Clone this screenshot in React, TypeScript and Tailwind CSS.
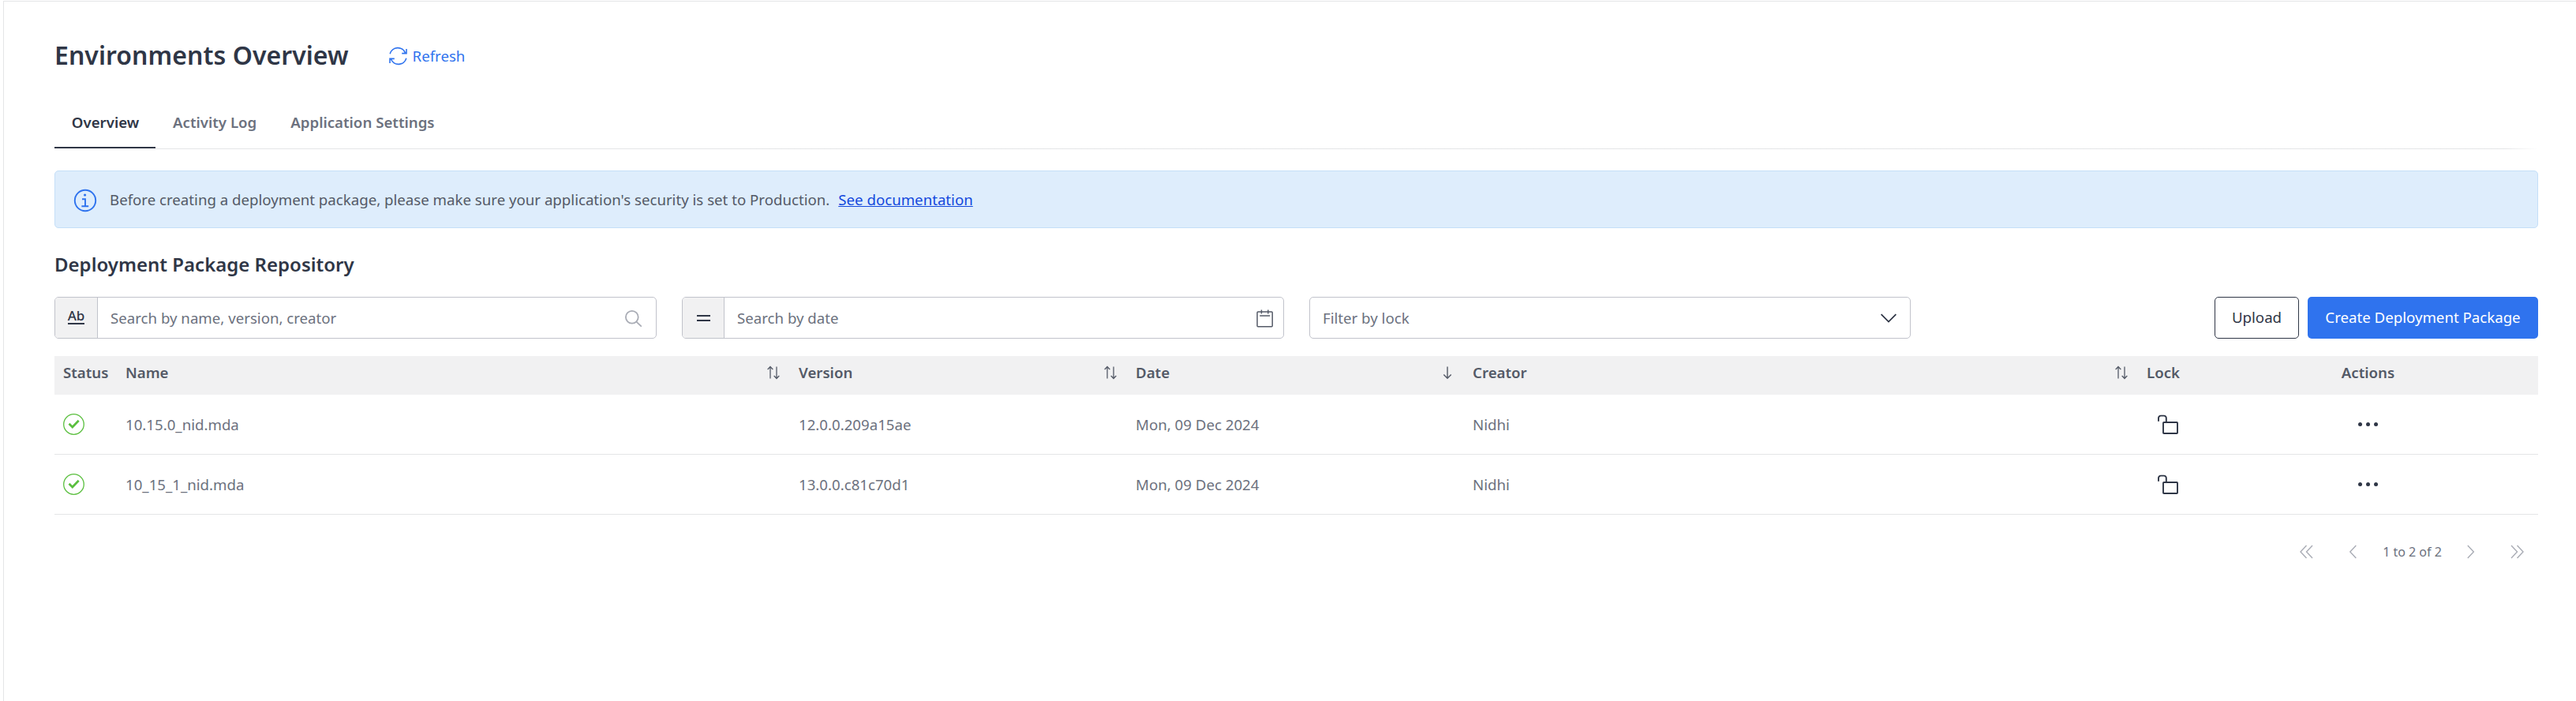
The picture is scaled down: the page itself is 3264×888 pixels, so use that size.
import React from "react";

const Refresh = () => (
  <svg className="size-6 shrink-0" viewBox="0 0 24 24" fill="none" stroke="currentColor" strokeWidth="1.6">
    <path d="M2.2 9.2A10.2 10.2 0 0 1 21.6 8.2M23 3V8.6H17.2" />
    <path d="M22.8 14.8A10.2 10.2 0 0 1 3.4 15.8M2 21V15.4H7.8" />
  </svg>
);

const Info = () => (
  <svg className="size-[30px] mt-[3px] shrink-0" viewBox="0 0 30 30" fill="none" stroke="#2f73ee" strokeWidth="1.9">
    <circle cx="15" cy="15" r="13.2" />
    <path d="M11 13.2H15V22M10.4 22.2H19.2" />
    <circle cx="14.6" cy="8" r="1.6" fill="#2f73ee" stroke="none" />
  </svg>
);

const Sort = () => (
  <svg className="w-4 h-[18px] shrink-0" viewBox="0 0 16 18" fill="none" stroke="#545a67" strokeWidth="1.3">
    <path d="M4 16.5V1.5M.7 5 4 1.5 7.3 5M12 1.5V16.5M8.7 13 12 16.5 15.3 13" />
  </svg>
);

const Down = () => (
  <svg className="w-4 h-[18px] shrink-0" viewBox="0 0 16 18" fill="none" stroke="#545a67" strokeWidth="1.4">
    <path d="M8 1.5V16M3.3 11.5 8 16.3 12.7 11.5" />
  </svg>
);

const Check = () => (
  <svg className="size-[27px]" viewBox="0 0 27 27" fill="none" stroke="#5bbf3f">
    <circle cx="13.5" cy="13.5" r="12.8" strokeWidth="1.3" />
    <path d="M7.5 12.8 11.8 17 19.7 8.8" strokeWidth="2.7" />
  </svg>
);

const Unlock = () => (
  <svg className="w-[26px] h-[25px] mr-px" viewBox="0 0 26 25" fill="none" stroke="#2f3646" strokeWidth="1.9">
    <path d="M1 8.7V4.6A3 3 0 0 1 4 1.6H7.8A3 3 0 0 1 10.8 4.6V9.5" />
    <rect x="7" y="10" width="18" height="14" rx="0.8" />
  </svg>
);

const columns = "grid grid-cols-[80px_853px_427px_427px_854px_75px_431px]";

const headers = [
  { label: "Name", icon: <Sort /> },
  { label: "Version", icon: <Sort /> },
  { label: "Date", icon: <Down /> },
  { label: "Creator", icon: <Sort /> },
];

const rows = [
  ["10.15.0_nid.mda", "12.0.0.209a15ae", "Mon, 09 Dec 2024", "Nidhi"],
  ["10_15_1_nid.mda", "13.0.0.c81c70d1", "Mon, 09 Dec 2024", "Nidhi"],
];

const Chevrons = ({ d }: { d: string }) => (
  <svg className="w-[18px] h-[18px] shrink-0" viewBox="0 0 18 18" fill="none" stroke="#a9acb5" strokeWidth="1.4">
    <path d={d} />
  </svg>
);

export default function App() {
  return (
    <div className="w-[3264px] h-[888px] bg-white pt-px font-['Noto_Sans',sans-serif] text-[18.667px] leading-[26px] text-[#6c717e] overflow-hidden">
      <div className="h-full border-t border-l border-[#e4e5e7] ml-1 pl-16 pr-12">
        <header className="flex items-center h-[136px] pt-0.5">
          <h1 className="mb-[3px] text-[32px] leading-[44px] font-semibold tracking-[0.04px] text-[#2f3646]">Environments Overview</h1>
          <button className="ml-[50px] flex items-center gap-[7px] text-[#2f73ee]">
            <Refresh />
            Refresh
          </button>
        </header>

        <nav className="flex h-[51px] w-[3145px] pt-1 font-semibold">
          <span className="w-32 h-[46px] pl-px text-center border-b-2 border-[#2f3646] text-[#2f3646]">Overview</span>
          <span className="ml-[22px]">Activity Log</span>
          <span className="ml-[43px]">Application Settings</span>
        </nav>
        <div className="h-px -mt-px ml-32 bg-linear-to-r from-[#e4e5e7] from-[98.6%] to-transparent" />

        <section className="mt-[27px] h-[73px] flex items-center rounded-[5px] border border-[#c4dff8] bg-[#deedfc] pl-[23px] text-[#545a67]">
          <Info />
          <span className="ml-4">Before creating a deployment package, please make sure your application's security is set to Production.</span>
          <a className="ml-[11px] text-[#1348dd] underline">See documentation</a>
        </section>

        <h2 className="mt-[29px] h-[58px] text-[24px] leading-[34px] font-semibold text-[#2f3646]">Deployment Package Repository</h2>

        <div className="flex h-[53px]">
          <div className="w-[763px] flex items-center rounded-[5px] border border-[#c1c3cb] overflow-hidden">
            <div className="w-[54px] h-full flex items-center justify-center border-r border-[#c1c3cb] bg-[#f1f1f2]">
              <span className="mb-[3px] border-b-2 border-[#2f3646] text-[17px] leading-[18px] font-medium text-[#2f3646]">Ab</span>
            </div>
            <span className="ml-4 grow">Search by name, version, creator</span>
            <svg className="w-6 h-6 mr-[17px]" viewBox="0 0 24 24" fill="none" stroke="#a9acb5" strokeWidth="1.8">
              <circle cx="10.8" cy="10.8" r="7.9" />
              <path d="M16.4 16.6 22.8 22.6" />
            </svg>
          </div>
          <div className="ml-8 w-[763px] flex items-center rounded-[5px] border border-[#c1c3cb] overflow-hidden">
            <div className="w-[53px] h-full flex flex-col gap-1 items-center justify-center border-r border-[#c1c3cb] bg-[#f1f1f2] pt-px">
              <div className="w-[17px] h-0.5 bg-[#2f3646]" />
              <div className="w-[17px] h-0.5 bg-[#2f3646]" />
            </div>
            <span className="ml-4 grow">Search by date</span>
            <svg className="w-[22px] h-6 mr-3" viewBox="0 0 22 24" fill="none" stroke="#545a67" strokeWidth="1.5">
              <rect x="1" y="3.9" width="19.2" height="18.8" rx="1" />
              <path d="M6.4 1.6V6.4M14.8 1.6V6.4M4.2 9.1H17.2" />
            </svg>
          </div>
          <div className="ml-8 w-[762px] flex items-center rounded-[5px] border border-[#c1c3cb]">
            <span className="ml-4 grow">Filter by lock</span>
            <svg className="w-5 h-3 mr-[17px] mt-px" viewBox="0 0 20 12" fill="none" stroke="#2f3646" strokeWidth="1.8">
              <path d="M.6 1.2 10 10.6 19.4 1.2" />
            </svg>
          </div>
          <button className="ml-auto w-[107px] rounded-[5px] border border-[#2f3646] pb-0.5 text-[#2f3646]">Upload</button>
          <button className="ml-[11px] w-[292px] rounded-[5px] bg-[#2f73ee] pb-0.5 text-white">Create Deployment Package</button>
        </div>

        <div className={`${columns} mt-[22px] h-[49px] pt-2 bg-[#f1f1f2] font-semibold text-[#545a67]`}>
          <span className="pl-[11px]">Status</span>
          {headers.map((h) => (
            <span key={h.label} className="flex items-start justify-between pl-2.5 pr-3.5">
              {h.label}
              <span className="pt-1">{h.icon}</span>
            </span>
          ))}
          <span className="pl-2.5">Lock</span>
          <span className="text-center">Actions</span>
        </div>

        {rows.map((r) => (
          <div key={r[0]} className={`${columns} h-[76px] items-center border-b border-[#e4e5e7]`}>
            <span className="pl-[11px]">
              <Check />
            </span>
            {r.map((c) => (
              <span key={c} className="pl-2.5">{c}</span>
            ))}
            <span className="flex justify-center">
              <Unlock />
            </span>
            <span className="flex justify-center gap-[4.5px]">
              <i className="size-[5.5px] rounded-full bg-[#2f3646]" />
              <i className="size-[5.5px] rounded-full bg-[#2f3646]" />
              <i className="size-[5.5px] rounded-full bg-[#2f3646]" />
            </span>
          </div>
        ))}

        <footer className="flex items-center justify-end h-[94px] pr-[18px] text-[16px]">
          <Chevrons d="M9.5 1 2 9 9.5 17M17 1 9.5 9 17 17" />
          <span className="w-[42px]" />
          <Chevrons d="M12.3 1 4.8 9 12.3 17" />
          <span className="w-[131px] text-center">1 to 2 of 2</span>
          <Chevrons d="M4.8 1 12.3 9 4.8 17" />
          <span className="w-10" />
          <Chevrons d="M2 1 9.5 9 2 17M9.5 1 17 9 9.5 17" />
        </footer>
      </div>
    </div>
  );
}
